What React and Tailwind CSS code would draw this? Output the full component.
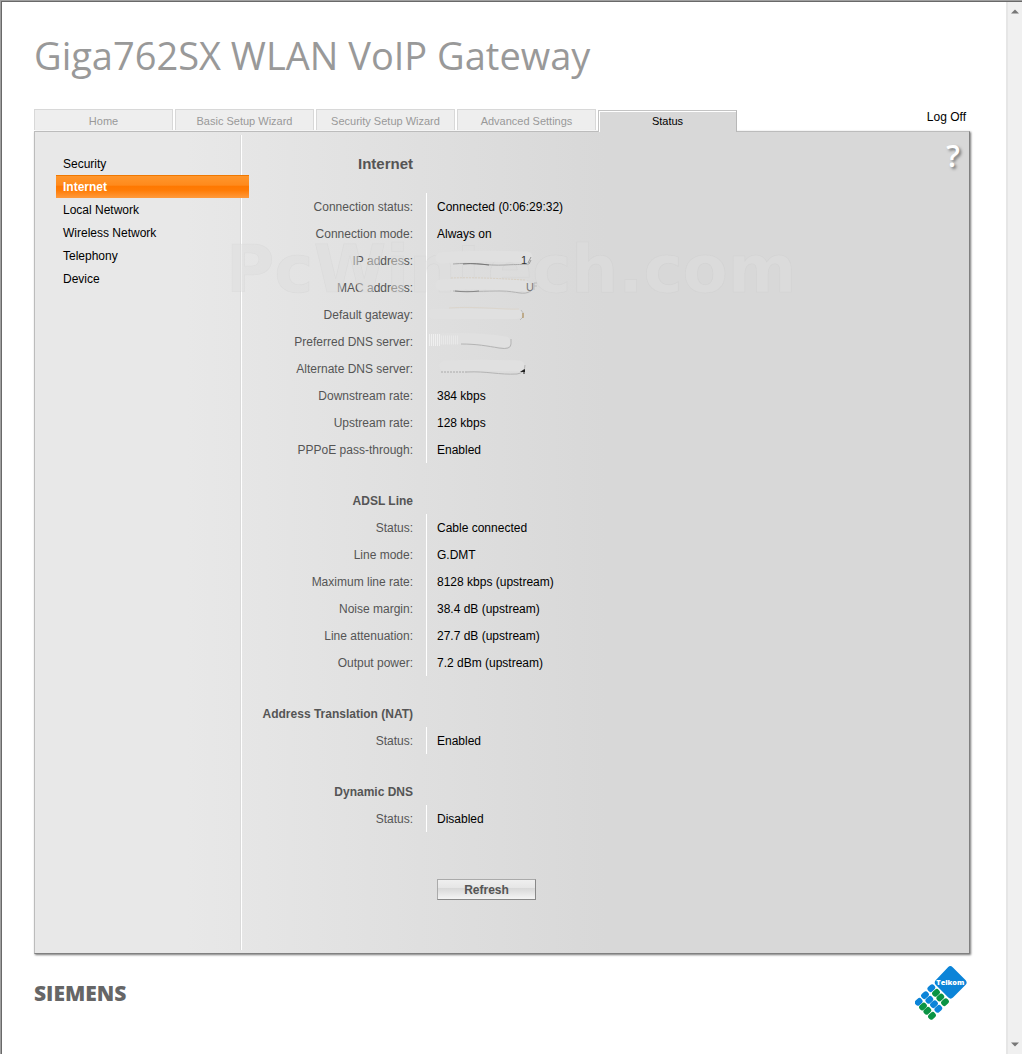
import React from "react";

const tabs = ["Home", "Basic Setup Wizard", "Security Setup Wizard", "Advanced Settings", "Status"];
const activeTab = "Status";

const menu = ["Security", "Internet", "Local Network", "Wireless Network", "Telephony", "Device"];
const activeItem = "Internet";

// values hidden by the smudge tool
const IpSmudge = () => (
    <svg className="relative z-20 block" width="110" height="27" viewBox="0 0 110 27" fill="none" aria-hidden="true">
        <path d="M14 11C40 8 70 9 100 10" stroke="#e0e0e0" strokeWidth="11" strokeLinecap="round" />
        <path d="M26 17C44 15 60 19 78 18S98 18 102 17" stroke="#aaa" strokeWidth="1" />
        <path d="M36 17C46 16 54 17 62 18" stroke="#777" strokeWidth="1" />
        <text x="94" y="17" fontSize="11" fill="#333" fontFamily="Liberation Sans, sans-serif">1</text>
        <path d="M101 16L104 10M102 17L104 13" stroke="#999" strokeWidth="1" />
    </svg>
);

const MacSmudge = () => (
    <svg className="relative z-20 block" width="110" height="27" viewBox="0 0 110 27" fill="none" aria-hidden="true">
        <path d="M14 11C40 9 70 10 98 12" stroke="#e0e0e0" strokeWidth="11" strokeLinecap="round" />
        <path d="M24 4C50 3 80 5 98 6" stroke="#d8d0c4" strokeWidth="1" strokeDasharray="2 1" />
        <path d="M26 17C44 18 58 17 74 17S96 22 104 17" stroke="#b4b4b4" strokeWidth="1" />
        <path d="M28 17C36 18 44 18 52 17" stroke="#888" strokeWidth="1" />
        <text x="99" y="17" fontSize="11" fill="#777" fontFamily="Liberation Sans, sans-serif">U</text>
        <path d="M107 9V16M107 9H110M107 12H110" stroke="#bbb" strokeWidth="1" />
    </svg>
);

const GatewaySmudge = () => (
    <svg className="relative z-20 block" width="110" height="27" viewBox="0 0 110 27" fill="none" aria-hidden="true">
        <path d="M6 13H90" stroke="#e0e0e0" strokeWidth="10" strokeLinecap="round" />
        <path d="M22 7C50 5 78 9 92 8" stroke="#dbd5cc" strokeWidth="1" />
        <path d="M94 9Q97 11 96 16L93 19" stroke="#bbb" strokeWidth="1" />
        <path d="M96 12V17" stroke="#b08a4a" strokeWidth="1" />
    </svg>
);

const PreferredSmudge = () => (
    <svg className="relative z-20 block" width="110" height="27" viewBox="0 0 110 27" fill="none" aria-hidden="true">
        <path d="M8 11C34 10 60 11 78 14" stroke="#e0e0e0" strokeWidth="11" strokeLinecap="round" />
        <path d="M2 12H14" stroke="#efefef" strokeWidth="12" strokeDasharray="1 1" />
        <path d="M14 12H32" stroke="#e8e8e8" strokeWidth="9" strokeDasharray="1 1" />
        <path d="M34 16C50 16 60 18 72 20Q84 22 84 16V11" stroke="#b4b4b4" strokeWidth="1" />
    </svg>
);

const AlternateSmudge = () => (
    <svg className="relative z-20 block" width="110" height="27" viewBox="0 0 110 27" fill="none" aria-hidden="true">
        <path d="M18 11C40 10 70 10 92 11" stroke="#e0e0e0" strokeWidth="11" strokeLinecap="round" />
        <path d="M14 17H40" stroke="#aaa" strokeWidth="1" strokeDasharray="2 1" />
        <path d="M40 17C60 16 72 20 90 19Q98 18 98 10" stroke="#b4b4b4" strokeWidth="1" />
        <path d="M93 17H98V14L96 15Z" fill="#222" />
        <path d="M97 15V19" stroke="#222" strokeWidth="1" />
    </svg>
);

const sections = [
    {
        title: "Internet",
        rows: [
            ["Connection status:", "Connected (0:06:29:32)"],
            ["Connection mode:", "Always on"],
            ["IP address:", <IpSmudge />],
            ["MAC address:", <MacSmudge />],
            ["Default gateway:", <GatewaySmudge />],
            ["Preferred DNS server:", <PreferredSmudge />],
            ["Alternate DNS server:", <AlternateSmudge />],
            ["Downstream rate:", "384 kbps"],
            ["Upstream rate:", "128 kbps"],
            ["PPPoE pass-through:", "Enabled"],
        ],
    },
    {
        title: "ADSL Line",
        rows: [
            ["Status:", "Cable connected"],
            ["Line mode:", "G.DMT"],
            ["Maximum line rate:", "8128 kbps (upstream)"],
            ["Noise margin:", "38.4 dB (upstream)"],
            ["Line attenuation:", "27.7 dB (upstream)"],
            ["Output power:", "7.2 dBm (upstream)"],
        ],
    },
    { title: "Address Translation (NAT)", rows: [["Status:", "Enabled"]] },
    { title: "Dynamic DNS", rows: [["Status:", "Disabled"]] },
];

const Tabs = () => (
    <nav className="flex gap-[2px]">
        {tabs.map((tab) =>
            tab === activeTab ? (
                <a
                    key={tab}
                    href="#status"
                    className="relative z-10 -mb-px mt-px flex h-[22px] w-[139px] items-center justify-center border-t border-r border-l border-t-[#c4c4c4] border-r-[#b8b8b8] border-l-[#c4c4c4] bg-[#d8d8d8] text-[11px] text-black shadow-[inset_1px_1px_0_#fff]"
                >
                    {tab}
                </a>
            ) : (
                <a
                    key={tab}
                    href="#tab"
                    className="mb-px flex h-[21px] w-[139px] items-center justify-center border-x border-t border-[#d8d8d8] bg-[#eeeeee] pt-[2px] text-[11px] text-[#999999]"
                >
                    {tab}
                </a>
            )
        )}
    </nav>
);

const SideMenu = () => (
    <aside className="my-[3px] w-[207px] shrink-0 border-r border-white pt-[17px] pl-[21px] shadow-[inset_-1px_0_0_#dadada]">
        <ul className="relative z-10 w-[193px]">
            {menu.map((item) => (
                <li key={item}>
                    {item === activeItem ? (
                        <a
                            href="#menu"
                            className="block h-[23px] border-t border-[#f07800] bg-[linear-gradient(to_bottom,#ff962c_0%,#ff8a1c_42%,#ff7800_46%,#ff7c06_65%,#ff9a3c_100%)] pl-[7px] leading-[22px] font-bold text-white"
                        >
                            {item}
                        </a>
                    ) : (
                        <a href="#menu" className="block h-[23px] pl-[7px] leading-[24px] text-black">
                            {item}
                        </a>
                    )}
                </li>
            ))}
        </ul>
    </aside>
);

const StatusSection = ({ title, rows, first }) => (
    <section className={first ? "" : "mt-6"}>
        <h2
            className={
                first
                    ? "mb-[16px] w-[171px] text-right text-[15px] leading-[27px] font-bold text-[#555555]"
                    : "h-[27px] w-[171px] text-right leading-[28px] font-bold text-[#555555]"
            }
        >
            {title}
        </h2>
        <table className="border-separate border-spacing-0">
            <tbody>
                {rows.map(([label, value]) => (
                    <tr key={label} className="h-[27px]">
                        <th scope="row" className="w-[185px] border-r border-white p-0 pr-[13px] text-right font-normal text-[#555555]">
                            {label}
                        </th>
                        <td className={typeof value === "string" ? "p-0 pl-[10px] text-black" : "p-0"}>{value}</td>
                    </tr>
                ))}
            </tbody>
        </table>
    </section>
);

const TelkomLogo = () => (
    <svg width="52" height="55" viewBox="75 105 156 164" role="img" aria-label="Telkom">
        <path d="M174 111Q181 104 188 111L227 150Q233 157 227 164L189 202Q182 209 175 202L137 164Q131 157 137 150Z" fill="#0b84d8" />
        <text x="181" y="165" textAnchor="middle" fontSize="22" fontWeight="800" fontFamily="Open Sans, sans-serif" fill="#fff">
            Telkom
        </text>
        {[
            [124, 174, "#0b84d8"],
            [105, 195, "#0b84d8"],
            [86, 215, "#0b84d8"],
            [138, 188, "#0a9444"],
            [118, 209, "#0b84d8"],
            [99, 229, "#0a9444"],
            [151, 202, "#0a9444"],
            [132, 222, "#0b84d8"],
            [112, 242, "#0a9444"],
            [165, 216, "#0a9444"],
            [145, 236, "#0b84d8"],
            [126, 257, "#0a9444"],
        ].map(([x, y, fill]) => (
            <rect key={`${x}-${y}`} x={x - 12} y={y - 9} width="24" height="18" rx="8" fill={fill} transform={`rotate(-42 ${x} ${y})`} />
        ))}
    </svg>
);

const ScrollBar = () => (
    <div className="flex w-4 shrink-0 flex-col items-center justify-between border-l-2 border-[#e6e6e6] bg-[#f0f0f0] py-[7px]">
        <svg width="8" height="5" viewBox="0 0 8 5" aria-hidden="true">
            <path d="M0 4.5L4 0.5L8 4.5Z" fill="#777" />
        </svg>
        <svg width="8" height="5" viewBox="0 0 8 5" aria-hidden="true">
            <path d="M0 0.5L4 4.5L8 0.5Z" fill="#777" />
        </svg>
    </div>
);

const App = () => {
    return (
        <div className="flex min-h-screen border-t border-l border-[#a0a0a0] bg-white font-['Liberation_Sans',Arial,sans-serif] text-[12px]">
            <div className="flex flex-1 border-t border-l border-[#696969]">
                <div className="flex-1 pr-9 pl-8">
                    <h1 className="pt-[27px] font-['Open_Sans',sans-serif] text-[38px] leading-[52px] text-[#999999]">
                        Giga762SX WLAN VoIP Gateway
                    </h1>
                    <div className="mt-[28px] flex items-start justify-between">
                        <Tabs />
                        <a href="#logoff" className="pr-1 leading-4 text-black">Log Off</a>
                    </div>

                    <main className="relative flex min-h-[823px] border border-t-[#bcbcbc] border-r-[#808080] border-b-[#808080] border-l-[#bcbcbc] bg-[linear-gradient(to_right,#e8e8e8_0px,#e8e8e8_150px,#d8d8d8_570px)] shadow-[1px_1px_2px_#777]">
                        <SideMenu />
                        <div className="flex-1 pt-[18px]">
                            {sections.map((section, i) => (
                                <StatusSection key={section.title} {...section} first={i === 0} />
                            ))}
                            <button className="mt-[47px] ml-[195px] h-[21px] w-[99px] border border-t-[#aaaaaa] border-r-[#888888] border-b-[#888888] border-l-[#aaaaaa] bg-[linear-gradient(to_bottom,#efefef_0%,#e6e6e6_40%,#d8d8d8_44%,#f4f4f4_100%)] font-bold text-[#555555]">
                                Refresh
                            </button>
                        </div>
                        <a
                            href="#help"
                            aria-label="Help"
                            className="mt-1 mr-[9px] h-10 font-['Open_Sans',sans-serif] text-[30px] leading-10 font-semibold text-white [text-shadow:2px_2px_3px_#777]"
                        >
                            ?
                        </a>
                        <div className="pointer-events-none absolute top-[98px] left-[191px] z-10 font-['DejaVu_Sans',sans-serif] text-[66px] leading-[80px] font-bold text-[#dddddd]/50 [-webkit-text-stroke:1px_rgba(0,0,0,0.02)]">
                            PcWintech.com
                        </div>
                    </main>

                    <footer className="mt-[11px] flex items-center justify-between pr-[3px]">
                        <span className="font-['Open_Sans',sans-serif] text-[21px] leading-6 font-extrabold text-[#666666]">SIEMENS</span>
                        <TelkomLogo />
                    </footer>
                </div>
                <ScrollBar />
            </div>
        </div>
    );
};

export default App;
